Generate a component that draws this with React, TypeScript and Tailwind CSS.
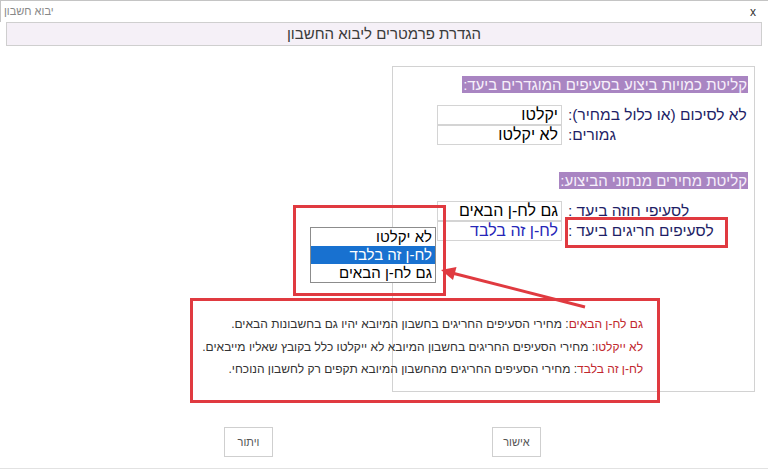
import React from "react";

const font = "font-['Liberation_Sans','DejaVu_Sans',sans-serif]";

function Row({ label, value, valueClass }: { label: string; value: string; valueClass?: string }) {
  return (
    <div className="flex items-center h-[20px]">
      <div className="w-[180px] text-left text-[15.5px] leading-[20px] text-[#1e1e66] whitespace-nowrap">{label}</div>
      <div className="mr-[6px] w-[125px] h-[20px] border border-[#d4d4d4] bg-white text-right pr-[3px] text-[16px] leading-[18px] whitespace-nowrap">
        <span className={valueClass ?? "text-black"}>{value}</span>
      </div>
    </div>
  );
}

function Heading({ children }: { children: React.ReactNode }) {
  return (
    <div className="flex">
      <span className="bg-[#a985c2] text-[#f7f0fb] text-[15px] leading-[17px] h-[17px] px-[1px] whitespace-nowrap">
        {children}
      </span>
    </div>
  );
}

export default function App() {
  return (
    <div className={`relative w-[768px] h-[471px] bg-white overflow-hidden ${font}`}>
      {/* title bar */}
      <div className="border-t border-[#c4c4c4] border-l h-[22px] flex items-center justify-between pl-[3px] pr-[12px]">
        <span dir="rtl" className="text-[11px] text-[#888] leading-none">יבוא חשבון</span>
        <span className="text-[12px] text-[#333] leading-none">x</span>
      </div>

      {/* header */}
      <div className="mx-[6px] h-[24px] border border-[#cfcfcf] bg-[#f5f0f7] flex items-center justify-center">
        <span dir="rtl" className="text-[15px] text-[#3a3a3a]">הגדרת פרמטרים ליבוא החשבון</span>
      </div>

      {/* panel */}
      <div className="ml-[392px] mt-[20px] w-[363px] h-[326px] border border-[#d2d2d2]">
        <div dir="rtl" className="pt-[9px] pr-[6px]">
          <Heading>קליטת כמויות ביצוע בסעיפים המוגדרים ביעד:</Heading>
          <div className="mt-[12px]">
            <Row label="לא לסיכום (או כלול במחיר):" value="יקלטו" />
            <Row label="גמורים:" value="לא יקלטו" />
          </div>
          <div className="mt-[27px]">
            <Heading>קליטת מחירים מנתוני הביצוע:</Heading>
          </div>
          <div className="mt-[12px]">
            <Row label="לסעיפי חוזה ביעד :" value="גם לח-ן הבאים" />
            <Row label="לסעיפים חריגים ביעד :" value="לח-ן זה בלבד" valueClass="text-[#2626b8]" />
          </div>
        </div>
      </div>

      {/* buttons */}
      <div className="flex mt-[35px] pl-[224px]">
        <button className="w-[49px] h-[30px] border border-[#cfcfcf] bg-white text-[11px] text-[#555]">ויתור</button>
        <button className="ml-[219px] w-[49px] h-[30px] border border-[#cfcfcf] bg-white text-[11px] text-[#555]">אישור</button>
      </div>
      <div className="mt-[11px] border-t border-[#e2e2e2]" />

      {/* open dropdown list */}
      <div dir="rtl" className="absolute left-[310px] top-[227px] w-[126px] border border-[#8c8c8c] bg-white text-[15px]">
        <div className="h-[18px] leading-[18px] pr-[3px] text-black">לא יקלטו</div>
        <div className="h-[18px] leading-[18px] pr-[3px] bg-[#1871d0] text-white">לח-ן זה בלבד</div>
        <div className="h-[18px] leading-[18px] pr-[3px] text-black">גם לח-ן הבאים</div>
      </div>

      {/* annotations */}
      <div className="absolute left-[293px] top-[205px] w-[153px] h-[91px] border-[3px] border-[#e03a40]" />
      <div className="absolute left-[565px] top-[217px] w-[163px] h-[31px] border-[3px] border-[#e03a40]" />
      <div
        dir="rtl"
        className="absolute left-[190px] top-[298px] w-[470px] h-[105px] border-[3px] border-[#e03a40] pt-[12px] pr-[14px] text-[12px] leading-[22.5px] text-[#333]"
      >
        <p><span className="text-[#c1272d]">גם לח-ן הבאים</span>: מחירי הסעיפים החריגים בחשבון המיובא יהיו גם בחשבונות הבאים.</p>
        <p><span className="text-[#c1272d]">לא ייקלטו</span>: מחירי הסעיפים החריגים בחשבון המיובא לא ייקלטו כלל בקובץ שאליו מייבאים.</p>
        <p><span className="text-[#c1272d]">לח-ן זה בלבד</span>: מחירי הסעיפים החריגים מהחשבון המיובא תקפים רק לחשבון הנוכחי.</p>
      </div>
      <svg className="absolute left-0 top-0 pointer-events-none" width="768" height="471">
        <line x1="585" y1="307" x2="454" y2="273.5" stroke="#e03a40" strokeWidth="3" />
        <polygon points="441,270 456.5,267 453,280" fill="#e03a40" />
      </svg>
    </div>
  );
}
